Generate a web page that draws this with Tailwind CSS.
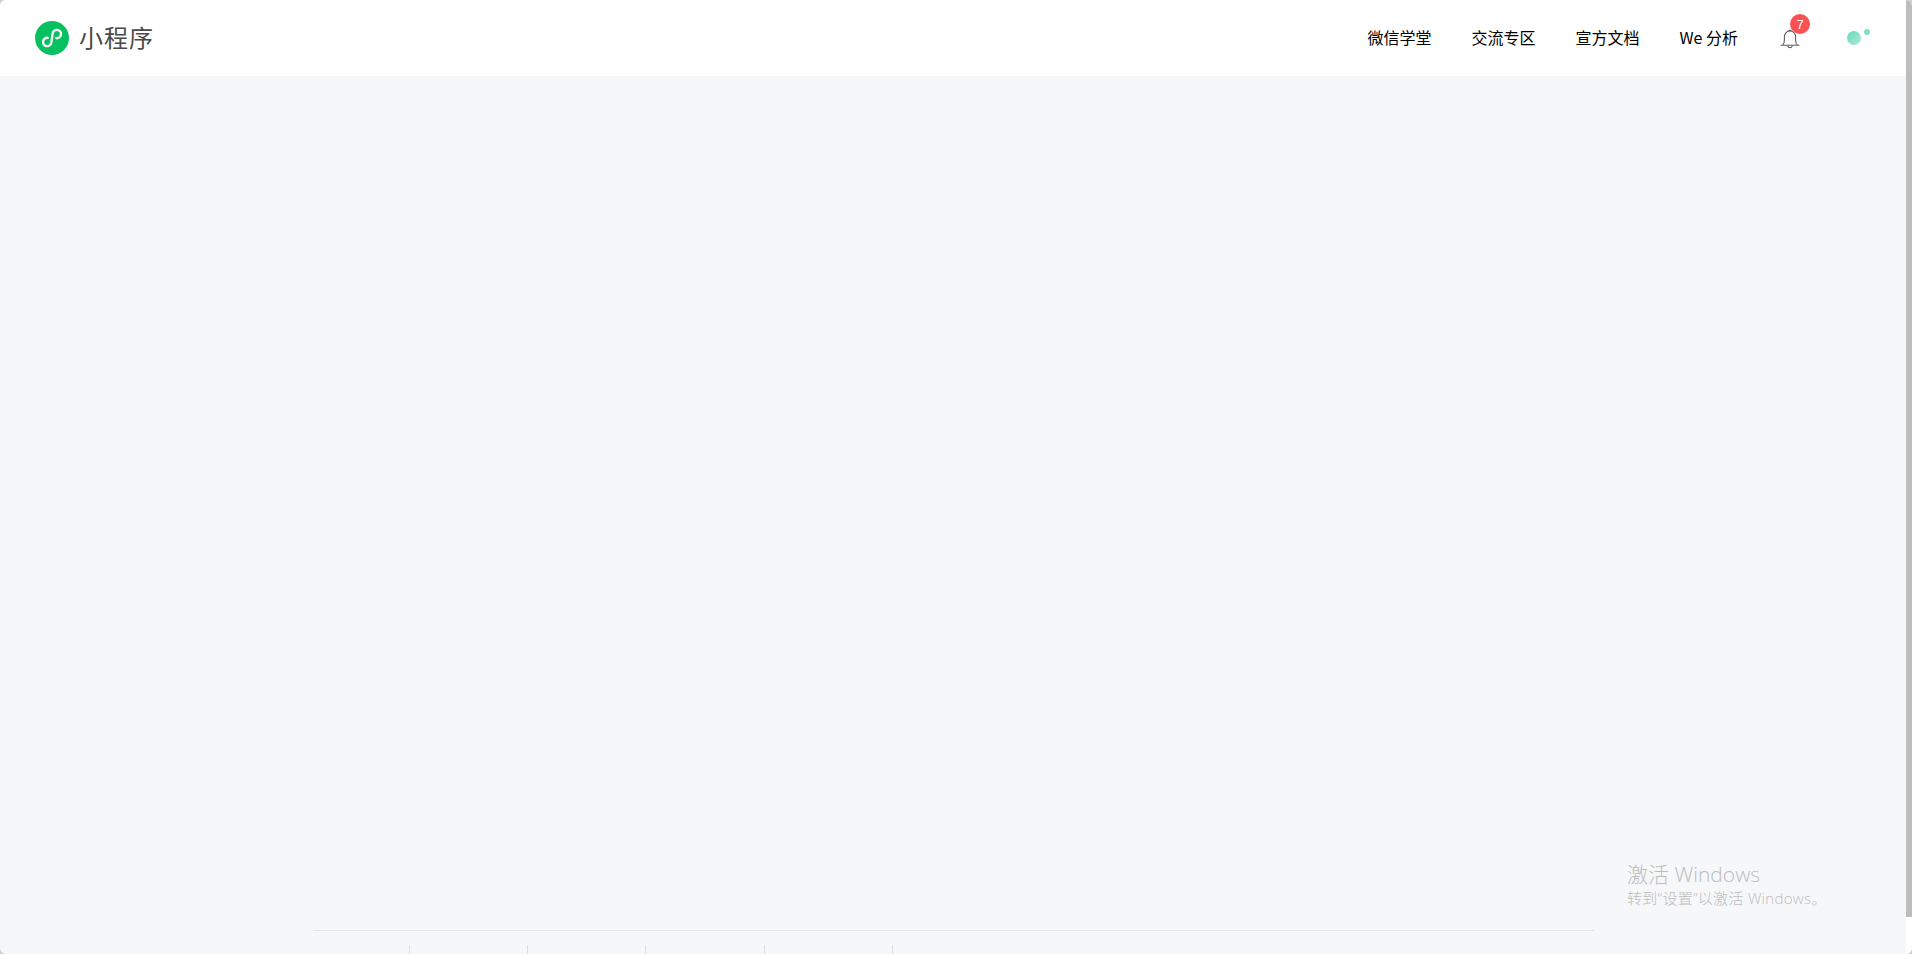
<!DOCTYPE html>
<html lang="zh-CN">
<head>
<meta charset="utf-8">
<title>小程序</title>
<script src="https://cdn.jsdelivr.net/npm/@tailwindcss/browser@4"></script>
</head>
<body class="bg-[#cfcfcf]">
<div class="relative flex h-[954px] w-[1912px] flex-col overflow-hidden rounded-[6px] bg-[#f6f7f9] font-['Noto_Sans_CJK_SC','Noto_Sans',sans-serif]">
  <header class="flex h-[76px] shrink-0 items-center bg-white pr-[41px] pl-[35px]">
    <div class="flex items-center gap-[10px]">
      <svg class="h-[34px] w-[34px]" viewBox="0 0 34 34" fill="none">
        <circle cx="17" cy="17" r="17" fill="#07c160"/>
        <path transform="rotate(8 17 17)" d="M12.800 17.400a4.200 4.200 0 1 0 4.200 4.300V12.300a4.200 4.200 0 1 1 4.200 4.300" stroke="#fff" stroke-width="2.300" stroke-linecap="round"/>
      </svg>
      <span class="mb-[2px] text-[24px] leading-none font-normal tracking-[1px] text-[#4a4a4a]">小程序</span>
    </div>
    <nav class="mb-[2px] ml-auto flex items-center gap-[40px] text-[16px] leading-none font-normal text-black">
      <a>微信学堂</a>
      <a>交流专区</a>
      <a>宣方文档</a>
      <a>We 分析</a>
    </nav>
    <div class="relative ml-[42px] h-[24px] w-[20px]">
      <svg class="h-[24px] w-[20px]" viewBox="0 0 20 24" fill="none" stroke="#5c5c5c" stroke-width="1.100">
        <path d="M2.800 19c1.200-1.500 1.600-3 1.600-5V10.500a5.600 5.600 0 0 1 11.200 0V14c0 2 .4 3.500 1.600 5" stroke-linejoin="round"/>
        <path d="M1 19.300h18" stroke-linecap="round"/>
        <path d="M7.800 19.500a2.200 2.200 0 0 0 4.400 0"/>
        <path d="M8.800 5.200a1.200 1.200 0 0 1 2.400 0"/>
      </svg>
      <span class="absolute -top-[12px] left-[10px] flex h-[20px] w-[20px] items-center justify-center rounded-full bg-[#fa5151] font-['Liberation_Sans',sans-serif] text-[13px] leading-none text-white">7</span>
    </div>
    <div class="relative ml-[47px] h-[20px] w-[24px]">
      <span class="absolute top-[3px] left-0 h-[14px] w-[14px] rounded-full bg-gradient-to-br from-[#62d6b6] to-[#aeecdb]"></span>
      <span class="absolute top-[1px] left-[17px] h-[6px] w-[6px] rounded-full bg-[#7fe0c6]"></span>
    </div>
  </header>
  <main class="flex flex-1 flex-col justify-end">
    <footer class="ml-[313px] h-[24px] w-[1281px] border-t border-[#e5e6e9] pt-[14px]">
      <div class="flex h-[10px]">
        <div class="w-[97px] border-r border-[#dcdde0]"></div>
        <div class="w-[118px] border-r border-[#dcdde0]"></div>
        <div class="w-[118px] border-r border-[#dcdde0]"></div>
        <div class="w-[119px] border-r border-[#dcdde0]"></div>
        <div class="w-[128px] border-r border-[#dcdde0]"></div>
      </div>
    </footer>
  </main>
  <div class="absolute top-[860px] left-[1627px] font-['Open_Sans','Noto_Sans_CJK_SC',sans-serif] font-light text-[#bcbdbf]">
    <div class="text-[21px] leading-[28px]">激活 Windows</div>
    <div class="text-[15px] leading-[20px] tracking-[0.3px]">转到“设置”以激活 Windows。</div>
  </div>
  <div class="absolute top-0 right-0 h-[954px] w-[6px] bg-white">
    <div class="h-[917px] w-[6px] bg-[#bdbdbd]"></div>
  </div>
</div>
</body>
</html>
